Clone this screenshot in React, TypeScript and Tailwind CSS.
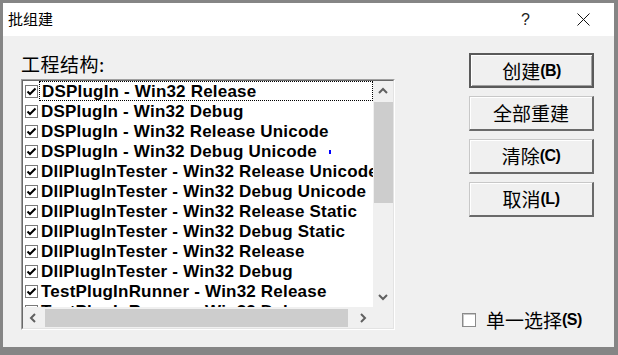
import React from "react";

const cjk = { fontFamily: '"Noto Sans CJK SC", "Liberation Sans", sans-serif' };
const sans = { fontFamily: '"Liberation Sans", Arial, sans-serif' };

const targets = [
  "DSPlugIn - Win32 Release",
  "DSPlugIn - Win32 Debug",
  "DSPlugIn - Win32 Release Unicode",
  "DSPlugIn - Win32 Debug Unicode",
  "DllPlugInTester - Win32 Release Unicode",
  "DllPlugInTester - Win32 Debug Unicode",
  "DllPlugInTester - Win32 Release Static",
  "DllPlugInTester - Win32 Debug Static",
  "DllPlugInTester - Win32 Release",
  "DllPlugInTester - Win32 Debug",
  "TestPlugInRunner - Win32 Release",
  "TestPlugInRunner - Win32 Debug",
];

const Check = () => (
  <svg width="13" height="13" viewBox="0 0 13 13" className="shrink-0">
    <rect x="0.5" y="0.5" width="12" height="12" fill="#fff" stroke="#7a7a7a" />
    <polyline points="2.5,6.5 5,9 10.5,3.5" fill="none" stroke="#000" strokeWidth="2" />
  </svg>
);

const Chevron = ({ dir }: { dir: "up" | "down" | "left" | "right" }) => {
  const pts = {
    up: "1,6 5,2 9,6",
    down: "1,2 5,6 9,2",
    left: "6,1 2,5 6,9",
    right: "2,1 6,5 2,9",
  }[dir];
  const vertical = dir === "up" || dir === "down";
  return (
    <svg width={vertical ? 10 : 8} height={vertical ? 8 : 10} viewBox={vertical ? "0 0 10 8" : "0 0 8 10"}>
      <polyline points={pts} fill="none" stroke="#606060" strokeWidth="2" />
    </svg>
  );
};

const Button = ({ label, hot, isDefault }: { label: string; hot?: string; isDefault?: boolean }) => (
  <button
    className={
      "w-[125px] h-[35px] bg-[#f0f0f0] flex items-center justify-center text-black " +
      (isDefault
        ? "border-2 border-[#5a5a5a] shadow-[inset_1px_1px_0_#fff,inset_-1px_-1px_0_#a0a0a0]"
        : "border border-[#c8c8c8] border-b-2 border-r-2 border-b-[#6a6a6a] border-r-[#6a6a6a] shadow-[inset_1px_1px_0_#fff]")
    }
  >
    <span className="text-[19px] leading-[20px]" style={cjk}>
      {label}
    </span>
    {hot && (
      <span className="text-[16px] font-bold leading-[20px] tracking-[-0.5px]" style={sans}>
        ({hot})
      </span>
    )}
  </button>
);

export default function App() {
  return (
    <div className="w-[618px] h-[355px] bg-[#858585] pl-[3px] pt-[3px] pr-[4px] pb-[8px] flex">
      <div className="flex-1 flex flex-col bg-[#f0f0f0]">
        {/* title bar */}
        <div className="h-[33px] bg-white flex items-center pl-[5px] shrink-0">
          <span className="flex-1 text-[15px] text-black" style={cjk}>
            批组建
          </span>
          <span className="text-[16px] text-[#222] mr-[47px]" style={sans}>
            ?
          </span>
          <svg width="13" height="13" viewBox="0 0 13 13" className="mr-[24px]">
            <path d="M0.5 0.5 L12.5 12.5 M12.5 0.5 L0.5 12.5" stroke="#111" strokeWidth="1" />
          </svg>
        </div>

        <div className="flex-1 flex">
          {/* left column */}
          <div className="pl-[18px] pt-[18px] flex flex-col">
            <div className="text-[19px] leading-[20px] tracking-[0.5px] text-black" style={cjk}>
              工程结构:
            </div>
            <div className="mt-[5px] w-[374px] h-[251px] border-t border-l border-[#a0a0a0] border-b border-r border-b-white border-r-white">
              <div className="w-full h-full border-t border-l border-[#696969] border-b border-r border-b-[#e3e3e3] border-r-[#e3e3e3] grid grid-cols-[350px_20px] grid-rows-[226px_21px]">
                <div className="bg-white overflow-hidden relative" style={sans}>
                  {targets.map((t, i) => (
                    <div key={t} className="h-[20px] flex items-center pl-[2px] whitespace-nowrap">
                      <Check />
                      <span
                        className={
                          "ml-[1px] pl-[2px] pt-[2px] h-[20px] flex items-center text-[17px] font-bold tracking-[0.2px] text-black " +
                          (i === 0 ? "flex-1 border border-dotted border-black" : "")
                        }
                      >
                        {t}
                      </span>
                    </div>
                  ))}
                  <span className="absolute left-[306px] top-[69px] w-[2px] h-[4px] bg-[#0000ff]" />
                </div>
                <div className="bg-[#f0f0f0] flex flex-col">
                  <div className="h-[20px] flex items-center justify-center">
                    <Chevron dir="up" />
                  </div>
                  <div className="mt-[1px] h-[101px] ml-[1px] bg-[#cdcdcd]" />
                  <div className="flex-1" />
                  <div className="h-[20px] flex items-center justify-center">
                    <Chevron dir="down" />
                  </div>
                </div>
                <div className="bg-[#f0f0f0] flex">
                  <div className="w-[20px] flex items-center justify-center">
                    <Chevron dir="left" />
                  </div>
                  <div className="ml-[2px] w-[303px] mt-[2px] mb-[1px] bg-[#cdcdcd]" />
                  <div className="flex-1" />
                  <div className="w-[20px] flex items-center justify-center">
                    <Chevron dir="right" />
                  </div>
                </div>
                <div className="bg-[#f0f0f0]" />
              </div>
            </div>
          </div>

          {/* right column */}
          <div className="ml-[67px] pt-[17px] flex flex-col">
            <div className="ml-[7px] flex flex-col gap-[8px]">
              <Button label="创建" hot="B" isDefault />
              <Button label="全部重建" />
              <Button label="清除" hot="C" />
              <Button label="取消" hot="L" />
            </div>
            <div className="mt-auto mb-[17px] h-[20px] flex items-center">
              <span className="w-[14px] h-[14px] bg-white border border-[#8a8a8a] shadow-[inset_1px_1px_0_#c8c8c8]" />
              <span className="ml-[10px] text-[19px] leading-[20px] text-black" style={cjk}>
                单一选择
              </span>
              <span className="text-[16px] font-bold leading-[20px] tracking-[-0.5px] text-black" style={sans}>
                (S)
              </span>
            </div>
          </div>
        </div>
      </div>
    </div>
  );
}
